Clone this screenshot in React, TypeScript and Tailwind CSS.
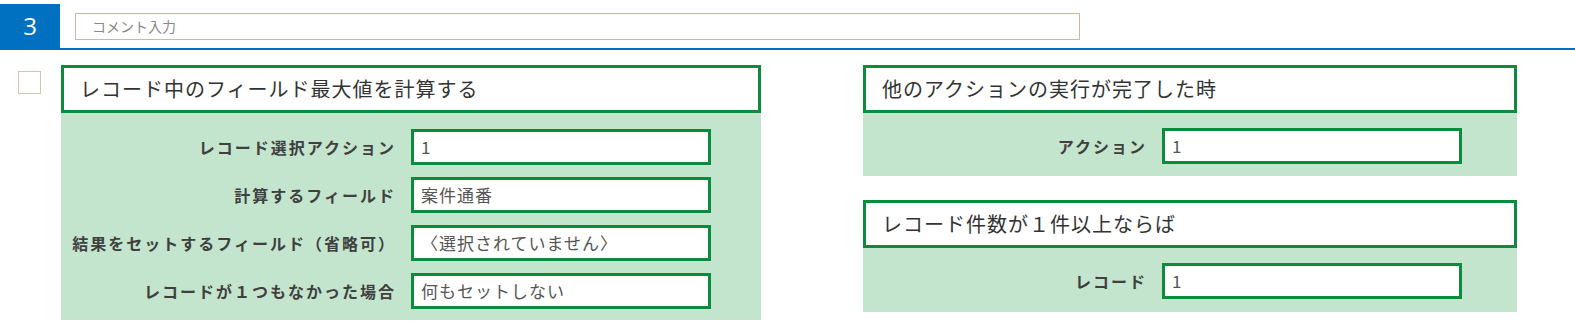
import React from 'react';

const FONT = { fontFamily: '"Noto Sans CJK JP", "Noto Sans", sans-serif' };

type Row = { label: string; value: string };

const FieldRow: React.FC<{ row: Row; labelWidth: string }> = ({ row, labelWidth }) => (
    <div className="flex items-center">
        <div className={`${labelWidth} shrink-0 text-right pr-[15px] text-[16px] font-bold tracking-[2px] text-[#3f3f3f]`}>
            {row.label}
        </div>
        <div className="w-[300px] h-[36px] bg-white border-[3px] border-[#0b8c3c] flex items-center px-[7px] text-[17px] text-[#555] tracking-[1px]">
            {row.value}
        </div>
    </div>
);

const ActionCard: React.FC<{
    title: string;
    rows: Row[];
    width: string;
    labelWidth: string;
    bodyClass: string;
}> = ({ title, rows, width, labelWidth, bodyClass }) => (
    <div className={`${width} shrink-0`}>
        <div className="h-[48px] bg-white border-[3px] border-[#0b8c3c] flex items-center pl-[16px] text-[20px] text-[#333] tracking-[1px]">
            {title}
        </div>
        <div className={`bg-[#c3e5cd] ${bodyClass}`}>
            {rows.map((r) => (
                <FieldRow key={r.label} row={r} labelWidth={labelWidth} />
            ))}
        </div>
    </div>
);

export default function App() {
    return (
        <div className="w-[1575px] h-[327px] bg-white overflow-hidden" style={FONT}>
            {/* step header */}
            <div className="pt-[4px] border-b-2 border-[#0070c0] flex items-start">
                <div className="w-[60px] h-[44px] bg-[#0070c0] text-white text-[24px] flex items-center justify-center" style={{ fontFamily: '"Open Sans", sans-serif' }}>
                    3
                </div>
                <div className="ml-[15px] mt-[9px] w-[1005px] h-[27px] border border-[#c9b8a5] flex items-center pl-[16px] text-[14px] text-[#888]">
                    コメント入力
                </div>
            </div>

            <div className="flex items-start pl-[18px] pt-[15px]">
                <div className="mt-[6px] w-[23px] h-[23px] border border-[#d6c4b0] shrink-0" />

                <div className="ml-[20px]">
                    <ActionCard
                        title="レコード中のフィールド最大値を計算する"
                        width="w-[700px]"
                        labelWidth="w-[350px]"
                        bodyClass="h-[207px] pt-[16px] flex flex-col gap-[12px]"
                        rows={[
                            { label: 'レコード選択アクション', value: '1' },
                            { label: '計算するフィールド', value: '案件通番' },
                            { label: '結果をセットするフィールド（省略可）', value: '〈選択されていません〉' },
                            { label: 'レコードが１つもなかった場合', value: '何もセットしない' },
                        ]}
                    />
                </div>

                <div className="ml-[102px] flex flex-col gap-[24px]">
                    <ActionCard
                        title="他のアクションの実行が完了した時"
                        width="w-[654px]"
                        labelWidth="w-[299px]"
                        bodyClass="h-[63px] pt-[15px]"
                        rows={[{ label: 'アクション', value: '1' }]}
                    />
                    <ActionCard
                        title="レコード件数が１件以上ならば"
                        width="w-[654px]"
                        labelWidth="w-[299px]"
                        bodyClass="h-[64px] pt-[15px]"
                        rows={[{ label: 'レコード', value: '1' }]}
                    />
                </div>
            </div>
        </div>
    );
}
